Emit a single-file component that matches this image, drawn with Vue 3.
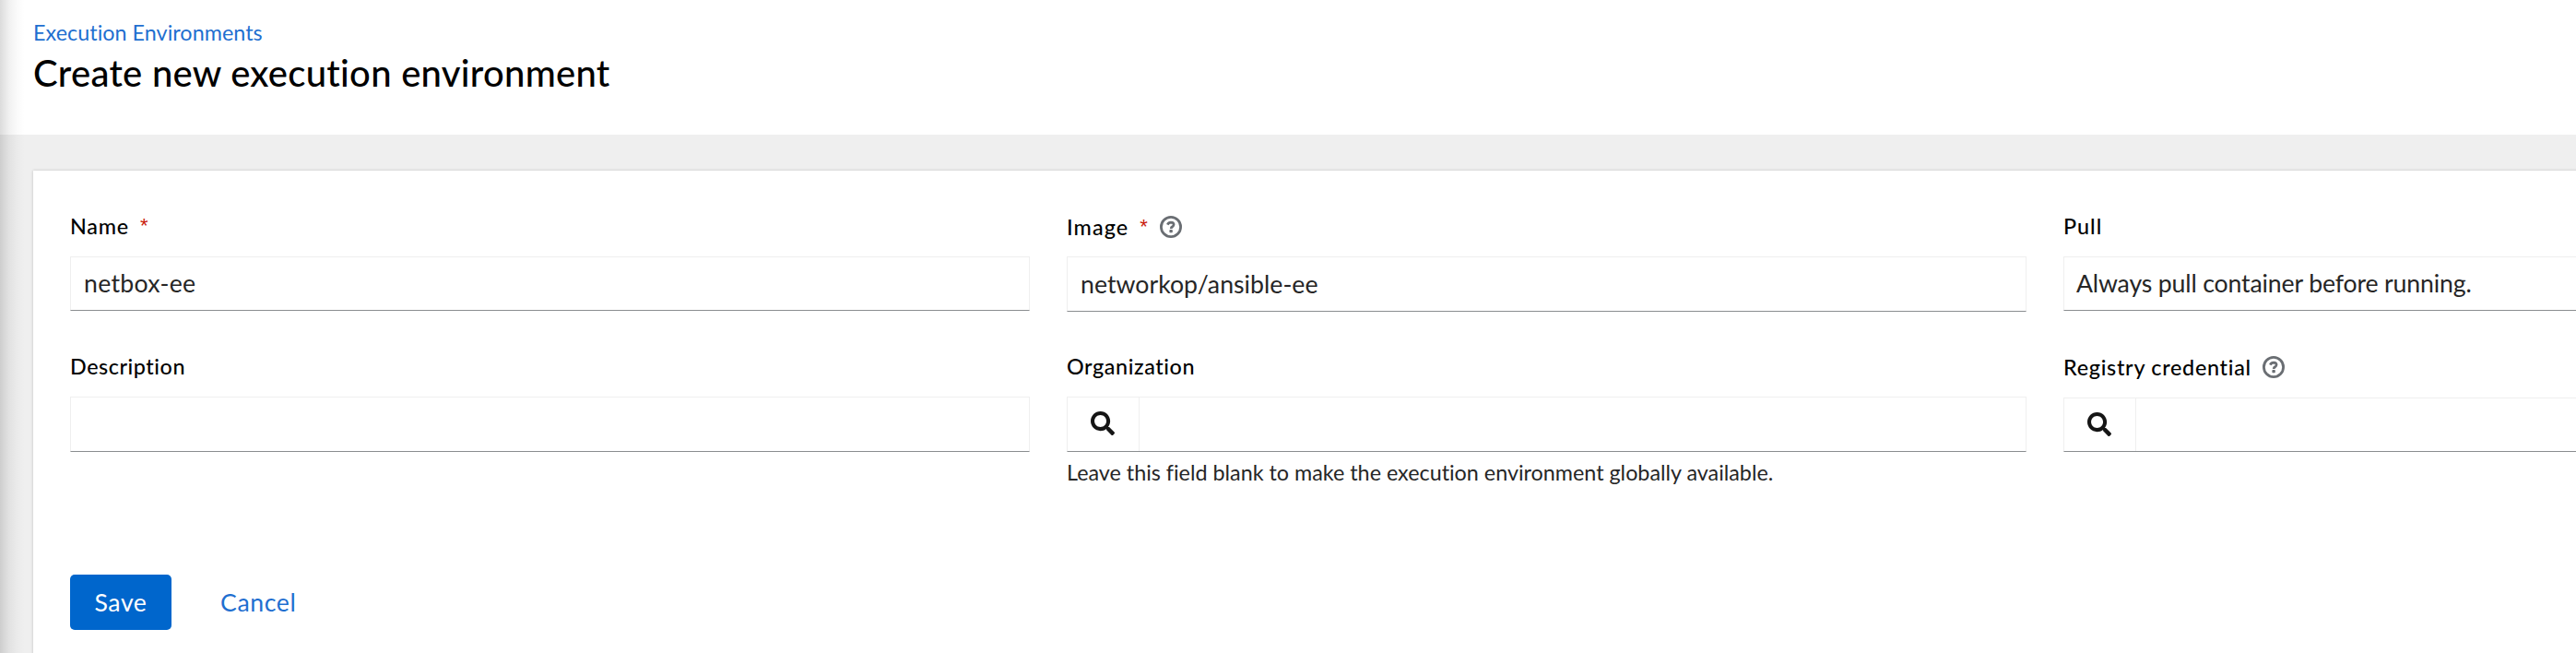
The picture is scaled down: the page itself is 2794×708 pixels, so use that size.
<script setup>
const fields = [
  { id: 'name', label: 'Name', required: true, value: 'netbox-ee' },
  { id: 'image', label: 'Image', required: true, help: true, value: 'networkop/ansible-ee' },
  { id: 'pull', label: 'Pull', value: 'Always pull container before running.' },
  { id: 'description', label: 'Description' },
  {
    id: 'organization',
    label: 'Organization',
    lookup: true,
    note: 'Leave this field blank to make the execution environment globally available.',
  },
  { id: 'registry', label: 'Registry credential', help: true, lookup: true },
]
</script>

<template>
  <div class="page">
    <header class="header">
      <a class="breadcrumb">Execution Environments</a>
      <h1 class="title">Create new execution environment</h1>
    </header>
    <main class="main">
      <form class="card">
        <div class="grid">
          <div v-for="f in fields" :key="f.id" class="field" :class="f.id">
            <div class="label-row">
              <label class="label">{{ f.label }}</label>
              <span v-if="f.required" class="required">*</span>
              <svg v-if="f.help" class="help" viewBox="0 0 24 24" aria-hidden="true">
                <circle cx="12" cy="12" r="10.6" fill="none" stroke="#6a6e73" stroke-width="2.8" />
                <path d="M8.3 9.6Q9.4 7.2 12.1 7.2Q15.1 7.3 15.1 9.6Q15.1 10.9 13.6 11.8Q12.2 12.5 12.2 13.9" fill="none" stroke="#6a6e73" stroke-width="2.7" />
                <rect x="10.4" y="15" width="3.4" height="3.2" rx=".8" fill="#6a6e73" />
              </svg>
            </div>
            <div class="control">
              <span v-if="f.lookup" class="lookup">
                <svg class="search" viewBox="0 0 512 512" aria-hidden="true">
                  <path fill="#151515" d="M505 442.7L405.3 343c-4.5-4.5-10.6-7-17-7H372c27.6-35.3 44-79.7 44-128C416 93.1 322.9 0 208 0S0 93.1 0 208s93.1 208 208 208c48.3 0 92.7-16.4 128-44v16.3c0 6.4 2.5 12.5 7 17l99.7 99.7c9.4 9.4 24.6 9.4 33.9 0l28.3-28.3c9.4-9.4 9.4-24.6.1-34zM208 336c-70.7 0-128-57.2-128-128 0-70.7 57.2-128 128-128 70.7 0 128 57.2 128 128 0 70.7-57.2 128-128 128z" />
                </svg>
              </span>
              <span v-if="f.value" class="value">{{ f.value }}</span>
            </div>
            <div v-if="f.note" class="note">{{ f.note }}</div>
          </div>
        </div>
        <div class="actions">
          <button type="button" class="save">Save</button>
          <button type="button" class="cancel">Cancel</button>
        </div>
      </form>
    </main>
    <div class="edge-shadow"></div>
  </div>
</template>

<style>
body {
  background: #efefef;
}
</style>

<style scoped>
.page {
  position: relative;
  display: flex;
  flex-direction: column;
  height: 708px;
  overflow: hidden;
  background: #efefef;
  font-family: Lato, "Liberation Sans", sans-serif;
  font-variant-ligatures: none;
  color: #262626;
}
.header {
  box-sizing: border-box;
  flex: none;
  height: 146px;
  padding: 18px 36px 0;
  background: #fff;
}
.breadcrumb {
  display: block;
  font-size: 23.33px;
  line-height: 35px;
  letter-spacing: 0.04px;
  color: #1f6fd0;
}
.title {
  margin: 0;
  font-size: 40px;
  line-height: 53px;
  font-weight: 500;
  letter-spacing: 0.27px;
  color: #000;
}
.main {
  flex: 1;
  min-height: 0;
  padding: 39px 0 0 36px;
}
.card {
  box-sizing: border-box;
  width: 3283px;
  height: 560px;
  padding: 42px 0 0 40px;
  background: #fff;
  box-shadow: 0 0 3px rgba(3, 3, 3, 0.2);
}
.grid {
  display: grid;
  grid-template-columns: repeat(3, 1041px);
  grid-template-rows: 152px 156px;
  column-gap: 40px;
}
.label-row {
  display: flex;
  align-items: flex-start;
  height: 51px;
  box-sizing: border-box;
}
.label {
  font-size: 23.33px;
  line-height: 37px;
  font-weight: 500;
  color: #000;
}
.required {
  margin-left: 12px;
  font-family: "Liberation Sans", sans-serif;
  font-size: 22px;
  line-height: 36px;
  color: #c9190b;
}
.help {
  width: 24px;
  height: 24px;
  margin: 6px 0 0 13px;
}
.registry .help {
  margin-left: 12px;
}
.image .label-row,
.registry .label-row {
  padding-top: 1px;
}
.registry .label-row {
  height: 52px;
}
.control {
  display: flex;
  box-sizing: border-box;
  height: 59px;
  border: 1px solid #efefef;
  border-bottom-color: #8a8d90;
  background: #fff;
}
.image .control,
.description .control,
.organization .control {
  height: 60px;
}
.value {
  padding-left: 14px;
  font-size: 26.67px;
  line-height: 57px;
  white-space: nowrap;
}
.image .value {
  line-height: 59px;
}
.pull .value {
  padding-left: 13px;
}
.lookup {
  box-sizing: border-box;
  width: 78px;
  padding: 15px 0 0 25px;
  border-right: 1px solid #efefef;
}
.search {
  display: block;
  width: 26px;
  height: 26px;
}
.note {
  padding-top: 5px;
  font-size: 23.33px;
  line-height: 35px;
  white-space: nowrap;
}
.name .label { letter-spacing: 0.8px; }
.image .label { letter-spacing: 1.1px; }
.pull .label { letter-spacing: 1px; }
.description .label { letter-spacing: 0.56px; }
.organization .label { letter-spacing: 0.6px; }
.registry .label { letter-spacing: 0.73px; }
.name .value { letter-spacing: 0.29px; }
.image .value { letter-spacing: 0.03px; }
.pull .value { letter-spacing: -0.15px; }
.actions {
  display: flex;
  padding-top: 88px;
}
.actions button {
  height: 60px;
  padding: 0;
  border: 0;
  font: 400 26.67px/60px Lato, "Liberation Sans", sans-serif;
  letter-spacing: 0.6px;
}
.save {
  width: 110px;
  border-radius: 5px;
  background: #06c;
  color: #fff;
}
.actions .cancel {
  margin-left: 53px;
  background: transparent;
  color: #1f6fd0;
}
.edge-shadow {
  position: absolute;
  inset: 0 auto 0 0;
  width: 27px;
  background: linear-gradient(to right, rgba(3, 3, 3, 0.14), rgba(3, 3, 3, 0.06) 35%, rgba(3, 3, 3, 0.02) 68%, transparent);
}
</style>
